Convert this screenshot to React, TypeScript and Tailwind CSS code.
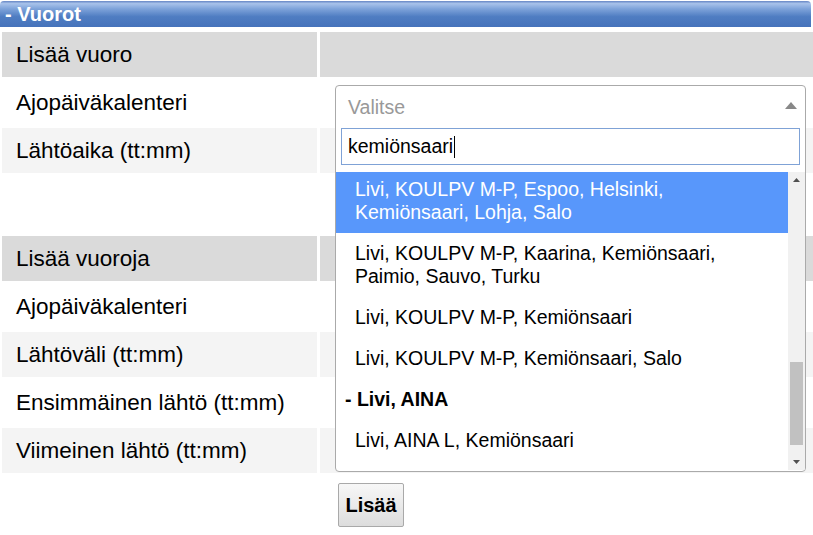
import React from "react";

type Row = { label: string; tone: "head" | "light" | "white"; tall?: boolean; button?: boolean };

const rows: Row[] = [
  { label: "Lisää vuoro", tone: "head" },
  { label: "Ajopäiväkalenteri", tone: "white" },
  { label: "Lähtöaika (tt:mm)", tone: "light" },
  { label: "", tone: "white", tall: true },
  { label: "Lisää vuoroja", tone: "head" },
  { label: "Ajopäiväkalenteri", tone: "white" },
  { label: "Lähtöväli (tt:mm)", tone: "light" },
  { label: "Ensimmäinen lähtö (tt:mm)", tone: "white" },
  { label: "Viimeinen lähtö (tt:mm)", tone: "light" },
  { label: "", tone: "white", tall: true, button: true },
];

const toneClass = {
  head: "bg-[#dadada]",
  light: "bg-[#f4f4f4]",
  white: "bg-white",
};

const results = [
  { text: "Livi, KOULPV M-P, Espoo, Helsinki, Kemiönsaari, Lohja, Salo", active: true },
  { text: "Livi, KOULPV M-P, Kaarina, Kemiönsaari, Paimio, Sauvo, Turku" },
  { text: "Livi, KOULPV M-P, Kemiönsaari" },
  { text: "Livi, KOULPV M-P, Kemiönsaari, Salo" },
  { text: "- Livi, AINA", group: true },
  { text: "Livi, AINA L, Kemiönsaari" },
];

function SelectDropdown() {
  return (
    <div className="absolute left-[15px] top-[5px] z-10 w-[471px] h-[387px] border border-[#aaaaaa] rounded-[4px] bg-white overflow-hidden">
      {/* valittu arvo */}
      <div className="h-[40px] flex items-center justify-between pl-[12px] pr-[8px] pt-[3px]">
        <span className="text-[19.5px] text-[#999999]">Valitse</span>
        <svg width="12" height="8" viewBox="0 0 12 8" className="-mt-[3px]">
          <path d="M0 7 L6 0 L12 7 Z" fill="#888888" />
        </svg>
      </div>
      {/* haku */}
      <div className="px-[5px] pt-[2px]">
        <div className="h-[37px] border border-[#7fa2d6] flex items-center pl-[6px] pt-px text-[19.5px] text-black">
          <span>kemiönsaari</span>
          <span className="inline-block w-px h-[22px] bg-black ml-px" />
        </div>
      </div>
      {/* tulokset */}
      <div className="mt-[7px] h-[298px] flex">
        <div className="flex-1 overflow-hidden">
          <ul className="-mt-[3px]">
            {results.map((r, i) => (
              <li
                key={i}
                className={
                  r.group
                    ? "pl-[9px] pr-[30px] py-[9px] text-[19.5px] leading-[23px] font-bold text-black"
                    : r.active
                      ? "pl-[19px] pr-[30px] py-[9px] text-[19.5px] leading-[23px] bg-[#5897fb] text-white"
                      : "pl-[19px] pr-[30px] py-[9px] text-[19.5px] leading-[23px] text-black"
                }
              >
                {r.text}
              </li>
            ))}
          </ul>
        </div>
        {/* vierityspalkki */}
        <div className="w-[17px] bg-[#f1f1f1] relative">
          <svg className="absolute left-[5px] top-[6px]" width="7" height="4" viewBox="0 0 7 4">
            <path d="M0 4 L3.5 0 L7 4 Z" fill="#505050" />
          </svg>
          <div className="absolute left-[2px] right-[2px] top-[190px] h-[83px] bg-[#c1c1c1]" />
          <svg className="absolute left-[5px] bottom-[6px]" width="7" height="4" viewBox="0 0 7 4">
            <path d="M0 0 L7 0 L3.5 4 Z" fill="#505050" />
          </svg>
        </div>
      </div>
    </div>
  );
}

export default function App() {
  return (
    <div className="w-[813px] h-[535px] overflow-hidden bg-white font-['Liberation_Sans',Arial,sans-serif] text-black">
      {/* otsikko */}
      <div className="mt-px h-[26px] w-[811px] rounded-t-[4px] bg-[linear-gradient(to_bottom,#6585c4_0%,#a8c2ea_10%,#7ea3da_30%,#4f7dc2_60%,#4673bb_100%)] pl-[5px] text-[20px] leading-[26px] font-bold text-white">
        - Vuorot
      </div>

      <div className="flex flex-col gap-[3px] pt-[5px] pl-[2px]">
        {rows.map((row, i) => (
          <div key={i} className={`flex ${row.tall ? "h-[57px]" : "h-[45px]"}`}>
            <div className={`w-[315px] flex items-center pl-[14px] text-[22.5px] ${toneClass[row.tone]}`}>
              {row.label}
            </div>
            <div className={`relative flex-1 ml-[3px] ${toneClass[row.tone]}`}>
              {i === 1 && <SelectDropdown />}
              {row.button && (
                <button className="mt-[7px] ml-[18px] h-[44px] w-[66px] border border-[#a9a9a9] rounded-[2px] bg-[linear-gradient(to_bottom,#f7f7f7,#dddddd)] text-[20px] font-bold text-black">
                  Lisää
                </button>
              )}
            </div>
          </div>
        ))}
      </div>
    </div>
  );
}
